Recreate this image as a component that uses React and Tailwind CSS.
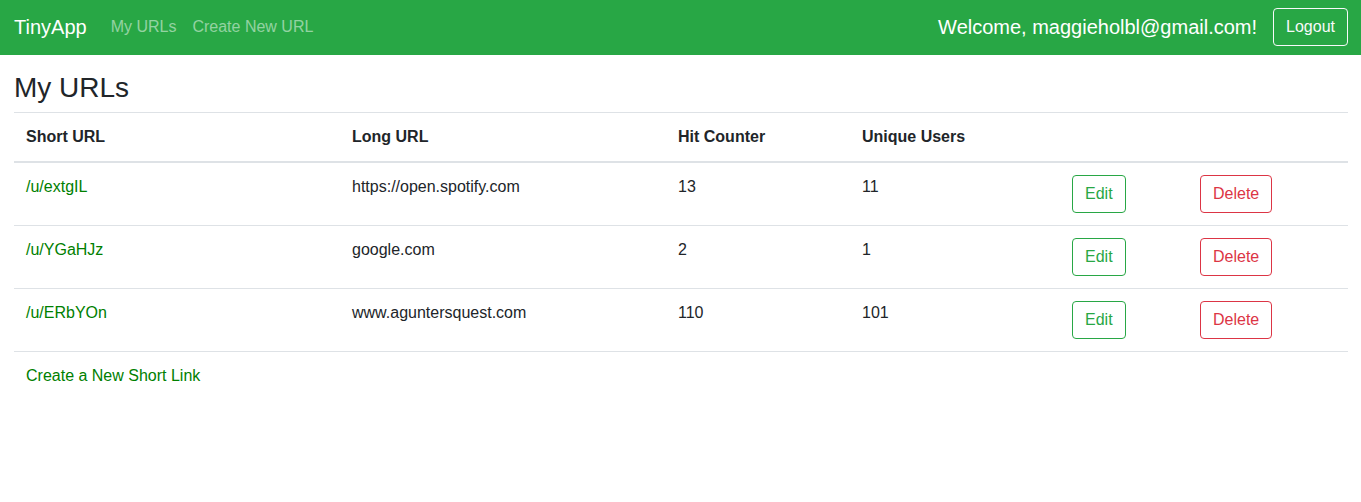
const rows = [
  { short: 'extgIL', long: 'https://open.spotify.com', hits: 13, unique: 11 },
  { short: 'YGaHJz', long: 'google.com', hits: 2, unique: 1 },
  { short: 'ERbYOn', long: 'www.aguntersquest.com', hits: 110, unique: 101 },
];

export default function App() {
  return (
    <div className="min-h-[502px] bg-white text-[#212529] text-base leading-6 font-['Liberation_Sans',Arial,sans-serif]">
      <nav className="h-[55px] bg-[#28a745] flex items-center pb-[2px] pl-[14px] pr-[13px]">
        <a className="text-[20px] leading-[30px] text-white mr-4">TinyApp</a>
        <a className="px-2 text-white/50">My URLs</a>
        <a className="px-2 text-white/50">Create New URL</a>
        <div className="ml-auto flex items-center">
          <span className="text-[20px] leading-[30px] text-white mr-4">
            Welcome, maggieholbl@gmail.com!
          </span>
          <button className="h-[38px] px-3 border border-[#f8f9fa] rounded text-[#f8f9fa]">
            Logout
          </button>
        </div>
      </nav>

      <div className="px-[14px] pt-4">
        <h3 className="text-[28px] leading-[34px] font-medium mb-[7px]">My URLs</h3>
        <table className="w-[1334px] table-fixed border-collapse">
          <thead>
            <tr className="border-t border-[#dee2e6]">
              <th className="w-[326px] p-3 text-left font-bold border-b-2 border-[#dee2e6]">Short URL</th>
              <th className="w-[326px] p-3 text-left font-bold border-b-2 border-[#dee2e6]">Long URL</th>
              <th className="w-[184px] p-3 text-left font-bold border-b-2 border-[#dee2e6]">Hit Counter</th>
              <th className="w-[210px] p-3 text-left font-bold border-b-2 border-[#dee2e6]">Unique Users</th>
              <th className="w-[128px] p-3 border-b-2 border-[#dee2e6]"></th>
              <th className="w-[160px] p-3 border-b-2 border-[#dee2e6]"></th>
            </tr>
          </thead>
          <tbody>
            {rows.map((r) => (
              <tr key={r.short} className="border-b border-[#dee2e6]">
                <td className="p-3 align-top">
                  <a className="text-[#008000]">/u/{r.short}</a>
                </td>
                <td className="p-3 align-top">{r.long}</td>
                <td className="p-3 align-top">{r.hits}</td>
                <td className="p-3 align-top">{r.unique}</td>
                <td className="p-3 align-top">
                  <button className="h-[38px] px-3 border border-[#28a745] rounded text-[#28a745]">Edit</button>
                </td>
                <td className="p-3 align-top">
                  <button className="h-[38px] px-3 border border-[#dc3545] rounded text-[#dc3545]">Delete</button>
                </td>
              </tr>
            ))}
          </tbody>
        </table>
        <div className="px-3 pt-3">
          <a className="text-[#008000]">Create a New Short Link</a>
        </div>
      </div>
    </div>
  );
}
